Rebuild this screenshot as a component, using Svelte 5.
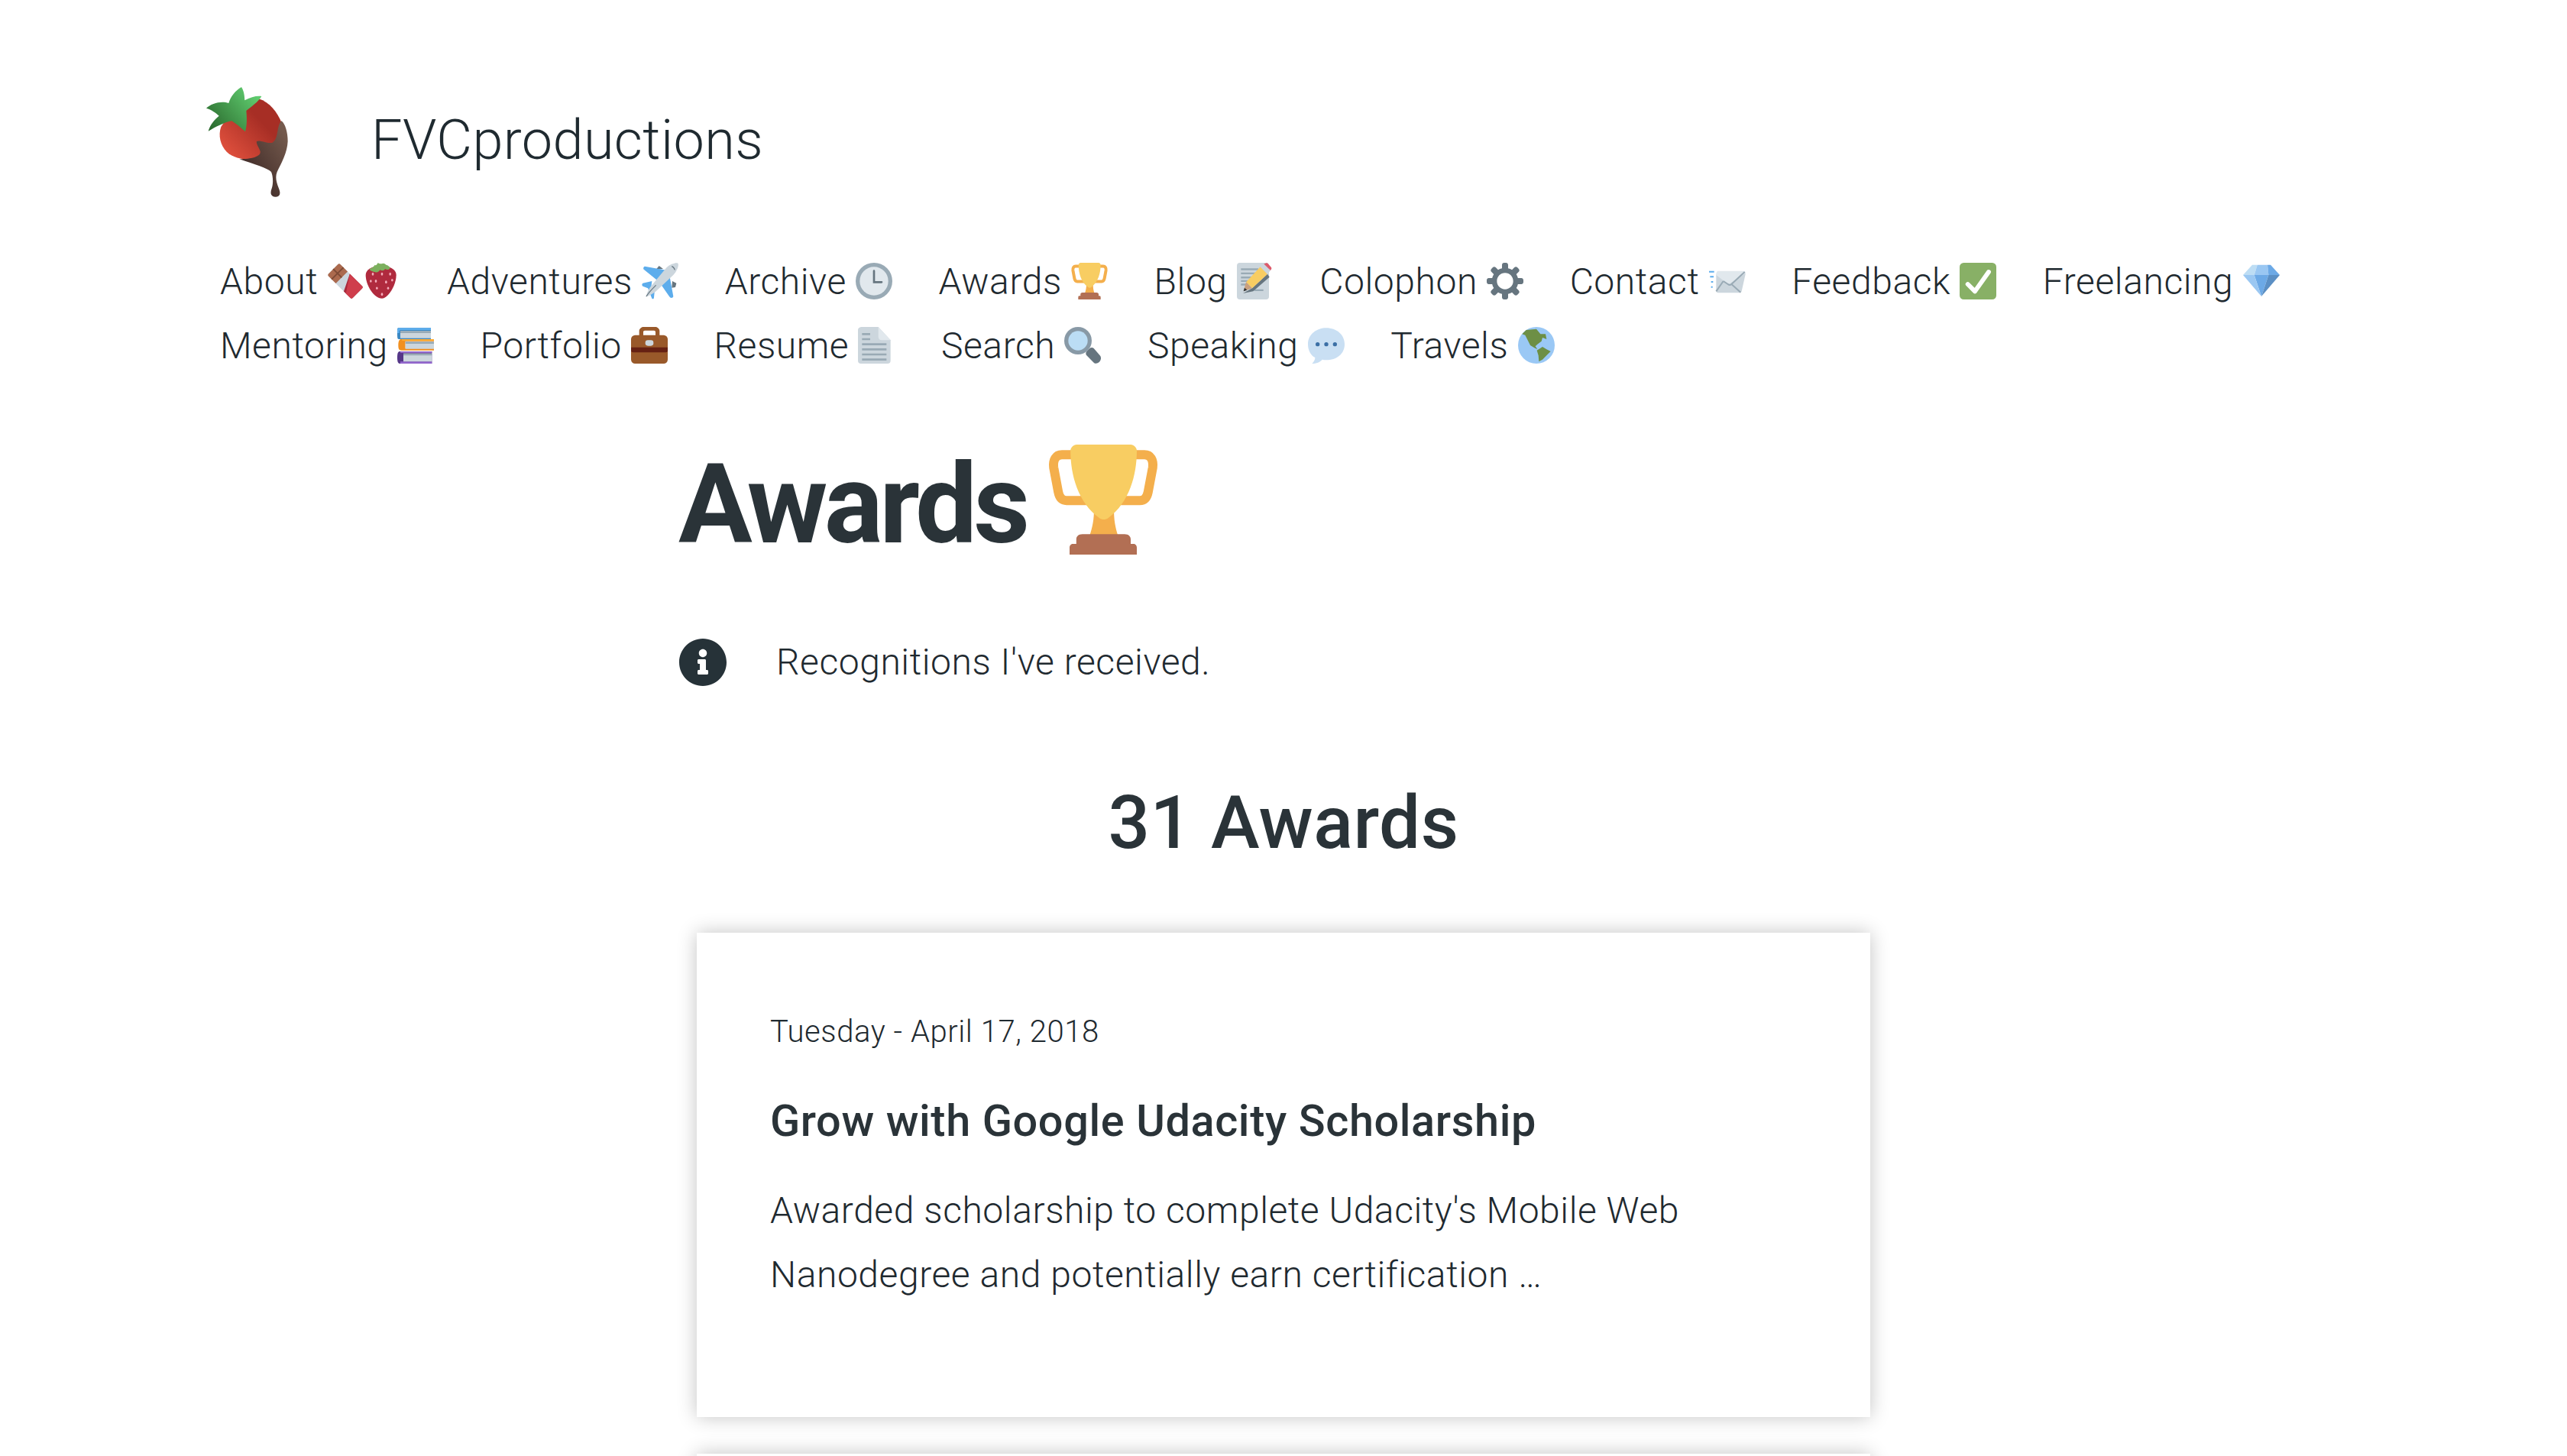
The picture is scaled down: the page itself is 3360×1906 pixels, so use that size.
<div class="page">
  <header class="brand">
    <svg class="logo" width="180" height="180" viewBox="0 0 540 540" aria-hidden="true">
      <defs>
        <linearGradient id="lr" x1="150" y1="340" x2="300" y2="200" gradientUnits="userSpaceOnUse"><stop offset="0" stop-color="#E5533F"/><stop offset="1" stop-color="#A72E25"/></linearGradient>
        <linearGradient id="lc" x1="230" y1="390" x2="410" y2="270" gradientUnits="userSpaceOnUse"><stop offset="0" stop-color="#3F2A27"/><stop offset="1" stop-color="#745A4D"/></linearGradient>
        <linearGradient id="lg" x1="110" y1="240" x2="280" y2="100" gradientUnits="userSpaceOnUse"><stop offset="0" stop-color="#2B6A2E"/><stop offset="1" stop-color="#5FCB6E"/></linearGradient>
      </defs>
      <path fill="url(#lr)" d="M296 118C340 132 368 170 386 212L380 292 300 352C262 362 200 356 170 326 145 300 136 262 148 228L200 150Z"/>
      <path fill="url(#lc)" d="M385 205C400 215 410 250 410 285 408 330 385 370 368 405 360 425 365 445 375 470 384 492 378 503 362 503 345 503 339 490 347 470 354 450 352 420 345 405 330 390 280 375 220 355 270 355 305 345 302 325 298 310 285 295 288 285 300 278 330 295 350 290 375 275 365 225 385 205Z"/>
      <path fill="url(#lg)" d="M228 72C240 90 240 112 241 124 265 110 290 105 307 108 295 130 265 150 247 165 250 195 250 225 243 247 225 230 205 215 190 205 160 210 125 230 98 245 105 220 122 200 140 185 130 175 110 160 90 155 110 135 150 125 178 135 185 110 205 85 228 72Z"/>
    </svg>
    <span class="site">FVCproductions</span>
  </header>

  {#snippet trophy(cls)}
    <svg class={cls} viewBox="0 0 36 36">
      <path fill="none" stroke="#F4AF4C" stroke-width="3" d="M11 3.300H4.500C2.500 3.300 1.500 5 1.800 7.500L3.300 15.500C3.700 17.500 4.600 18.300 6 18.300H30C31.400 18.300 32.300 17.500 32.700 15.500L34.200 7.500C34.500 5 33.500 3.300 31.500 3.300H25"/>
      <path fill="#F4AF4C" d="M15 21h6.500c0 3.500.4 6 1.400 9H13.500c1-3 1.500-5.500 1.500-9Z"/>
      <path fill="#F8CD62" d="M7.300 2c0-1 1-2 2-2h17.700c1 0 2 1 2 2 0 8-2.500 17-9.300 22-1 .7-2.100.7-3 0C9.800 19 7.300 10 7.300 2Z"/>
      <path fill="#B26F54" d="M9.200 31c0-1 .7-1.700 2-1.700h13.800c1.300 0 2 .7 2 1.700v1.500h1c.6 0 1 .6 1 1.200V36H7v-2.300c0-.6.400-1.200 1-1.200h1.200Z"/>
    </svg>
  {/snippet}

  <nav class="nav">
    <a href="#about">About <span class="pair"><svg class="em" viewBox="0 0 36 36">
      <g transform="translate(18 18) rotate(-45)">
        <rect x="-8.2" y="-16.8" width="16.4" height="33.6" rx="1.6" fill="#CCD6DD"/>
        <path fill="#AB6A4E" d="M-8.2-15.2a1.600 1.600 0 0 1 1.600-1.600H6.600a1.600 1.600 0 0 1 1.600 1.600V-5H-8.200Z"/>
        <path fill="#7D4A35" d="M-.7-16.800H.7V-5H-.7ZM-8.200-11.500H8.200v1.400H-8.200Z"/>
        <path fill="#A82A3C" d="M8.200-2V15.200a1.600 1.600 0 0 1-1.600 1.600H-6.600a1.600 1.600 0 0 1-1.600-1.600V6Z"/>
        <path fill="#CF3E4C" d="M8.200-2V15.200a1.600 1.600 0 0 1-1.600 1.600H-6.600a1.600 1.600 0 0 1-1.600-1.600V9Z"/>
      </g></svg><svg class="em" viewBox="0 0 36 36">
      <g transform="translate(-1 0)">
        <path fill="#B02A3E" d="M3 12C3 7 9 3 18 3s15 4 15 9c0 10-8 23-14 23C11 35 3 22 3 12Z"/>
        <path fill="#7CB05E" d="M7 6c2-1 4-2 5-4 1 1 2 0 3-2 1 1 3 1 4 1 1-1 3 0 4 1 1 0 3 1 4 3-1 2-3 2-5 1-1 2-3 2-5 1-1 2-3 3-5 2-2 0-4-1-5-2Z"/>
        <g fill="#F4ABBA"><ellipse cx="10" cy="11" rx="1" ry="1.500"/><ellipse cx="19" cy="11" rx="1" ry="1.500"/><ellipse cx="27" cy="11" rx="1" ry="1.500"/><ellipse cx="13" cy="18" rx="1" ry="1.500"/><ellipse cx="23" cy="19" rx="1" ry="1.500"/><ellipse cx="8" cy="18" rx="1" ry="1.300"/><ellipse cx="29" cy="17" rx="1" ry="1.300"/><ellipse cx="14" cy="25" rx="1" ry="1.300"/><ellipse cx="25" cy="25" rx="1" ry="1.300"/><ellipse cx="19" cy="31" rx="1" ry="1.500"/></g>
      </g></svg></span></a>

    <a href="#adventures">Adventures <svg class="em" viewBox="0 0 36 36">
      <path fill="#66757F" d="M14 6.500l3-3.500 4 3ZM30 18l4 2-1 4-3.500 .5Z"/>
      <path fill="#5DADEC" d="M3 3.500C1.500 4 1 6 2.500 7L15 17 25 7.500ZM27 11L18 20l9 13c1 2 3.500 2 4 0ZM10 18L1 20c-1 1-1 2 0 3l8 3ZM6 25l4 10c1 1 2 .5 2-1l1-10Z"/>
      <path fill="#CCD6DD" d="M35.500 .5C36.500 2 35.500 7 31 12L14 28C10 31 6 33 4 33.500 4.500 31.500 6 27 9 23L24 5C28 1 34-.5 35.500 .5Z"/>
      <path fill="none" stroke="#66757F" stroke-width=".9" d="M4.500 33C7.500 28 11 25 14 22M29.500 3.500c1.500 .5 2.500 2 3 3.500"/></svg></a>

    <a href="#archive">Archive <svg class="em" viewBox="0 0 36 36">
      <circle cx="18" cy="18" r="18" fill="#99AAB5"/><circle cx="18" cy="18" r="14" fill="#E1E8ED"/>
      <path fill="none" stroke="#66757F" stroke-width="2" stroke-linecap="round" d="M18 8v11h7.500"/></svg></a>

    <a href="#awards">Awards {@render trophy('em')}</a>

    <a href="#blog">Blog <svg class="em" viewBox="0 0 36 36">
      <rect width="31.500" height="36" rx="3" fill="#CCD6DD"/>
      <path fill="#99AAB5" d="M4 5.500h17v1.800H4ZM4 9.500h15v1.800H4ZM4 13.500h12v1.800H4ZM4 17h9v1.800H4ZM4 20.500h7v1.800H4ZM17 26h9v1.800H17Z"/>
      <path fill="#66757F" d="M30 11l2 3L16 28 6 30l9-5Z"/>
      <path fill="#F8CD62" d="M23 4l7 7L15 25l-6-6Z"/>
      <path fill="#CCD6DD" d="M26.500 1.200L33 7.500 30 11l-7-7Z"/>
      <path fill="#DD5A6B" d="M26.500 1.200L29 .2c.5-.2 1 0 1.300 .3L33.700 4.500c.4 .5 .4 1 .2 1.500L33 7.500Z"/>
      <path fill="#C9A07E" d="M9 19l6 6-8.500 3Z"/>
      <path fill="#292F33" d="M6.500 28l1-3.500L10 26.800Z"/></svg></a>

    <a href="#colophon">Colophon <svg class="em" viewBox="0 0 36 36">
      <path fill="#66757F" fill-rule="evenodd" d="M34 15h-3.362c-.324-1.369-.864-2.651-1.582-3.814l2.379-2.379c.781-.781.781-2.048 0-2.829l-1.414-1.414c-.781-.781-2.048-.781-2.828 0l-2.379 2.379C23.650 6.225 22.369 5.686 21 5.362V2c0-1.104-.896-2-2-2h-2c-1.104 0-2 .896-2 2v3.362c-1.369.324-2.651.864-3.814 1.582L8.808 4.565c-.781-.781-2.048-.781-2.828 0L4.565 5.979c-.781.781-.781 2.048-.001 2.829l2.379 2.379C6.225 12.350 5.686 13.632 5.362 15H2c-1.104 0-2 .896-2 2v2c0 1.104.896 2 2 2h3.362c.324 1.368.864 2.650 1.582 3.813l-2.379 2.379c-.780.780-.780 2.048.001 2.829l1.414 1.414c.780.780 2.047.780 2.828 0l2.379-2.379c1.163.719 2.445 1.258 3.814 1.582V34c0 1.104.896 2 2 2h2c1.104 0 2-.896 2-2v-3.362c1.369-.324 2.650-.864 3.813-1.582l2.379 2.379c.781.780 2.048.780 2.828 0l1.414-1.414c.781-.781.781-2.049 0-2.829l-2.379-2.379c.719-1.163 1.258-2.445 1.582-3.814H34c1.104 0 2-.896 2-2v-2c0-1.104-.896-2-2-2zM18 26c-4.418 0-8-3.582-8-8s3.582-8 8-8 8 3.582 8 8-3.582 8-8 8z"/></svg></a>

    <a href="#contact">Contact <svg class="em" viewBox="0 0 36 36">
      <path fill="#CCD6DD" d="M9 10l24-1c2 0 3 1 2.700 2.500L32 28c-.300 1-1 1.500-2.500 1.500H9c-1.500 0-2-1-2-2.500L7 12c0-1 1-2 2-2Z"/>
      <path fill="#E1E8ED" d="M9 8h25c1.500 0 2 1 1.500 2.500L21 20c-1 .700-2.500.700-3.500 0L7 12c0-2 .500-4 2-4Z"/>
      <path fill="none" stroke="#99AAB5" stroke-width="1.500" d="M35 9L22 21c-1 .800-2.500.800-3.500 0L14 18M14 18L7 28M22 21l9 8"/>
      <path fill="#5DADEC" d="M0 8h5v1.500H0ZM1 13h3.500v1.500H1ZM2 18h2v1.500H2ZM2 23h1.500v1.500H2Z"/></svg></a>

    <a href="#feedback">Feedback <svg class="em" viewBox="0 0 36 36">
      <rect width="36" height="36" rx="4" fill="#88B066"/>
      <path fill="none" stroke="#fff" stroke-width="4.400" stroke-linecap="round" stroke-linejoin="round" d="M8 21l7 7L28.500 9"/></svg></a>

    <a href="#freelancing">Freelancing <svg class="em" viewBox="0 0 36 36">
      <path fill="#BDDDF4" d="M9 2h5l-3 10H0Z"/>
      <path fill="#9AC7F2" d="M14 2h10l1 10H11Z"/>
      <path fill="#6CA9E6" d="M24 2h3l9 10H25ZM11 12h14l-7 21Z"/>
      <path fill="#9AC7F2" d="M0 12h11l7 21Z"/>
      <path fill="#5B8FC4" d="M25 12h11L18 33Z"/></svg></a>

    <a href="#mentoring">Mentoring <svg class="em" viewBox="0 0 36 36">
      <path fill="#3B88C3" d="M2 1h31v11H2C0 12 0 11 0 6s0-5 2-5Z"/><path fill="#5DADEC" d="M2 1h31v2H4C2 3 2 4 2 6h-2c0-4 0-5 2-5Z"/>
      <path fill="#CCD6DD" d="M3 4h30v7H3Z"/><path fill="#99AAB5" d="M3 4h30v2H3Z"/>
      <path fill="#F19020" d="M4 12h32v2H8v7h28v2H4c-2 0-3-1-3-5s1-6 3-6Z"/><path fill="#FFAC33" d="M4 12h32v1.500H5Z"/>
      <path fill="#CCD6DD" d="M8 14.500h28v7H8Z"/><path fill="#99AAB5" d="M8 14.500h28v2H8Z"/>
      <path fill="#553788" d="M3 24h31v12H3c-2 0-3-1-3-6s1-6 3-6Z"/><path fill="#9266CC" d="M3 34h31v2H3ZM3 24h31v1.500H3Z"/>
      <path fill="#CCD6DD" d="M6 26h28v8H6Z"/><path fill="#99AAB5" d="M6 26h28v2H6Z"/></svg></a>

    <a href="#portfolio">Portfolio <svg class="em" viewBox="0 0 36 36">
      <path fill="#99592A" fill-rule="evenodd" d="M12 0h12c2 0 4 2 4 4v6h-4V5c0-1-.500-1.500-1.500-1.500h-9C12.500 3.500 12 4 12 5v5H8V4c0-2 2-4 4-4Z"/>
      <rect y="8" width="36" height="28" rx="4" fill="#99592A"/>
      <path fill="#662113" d="M0 20h36v3.500c0 1-1 1.500-2 1.500H2c-1 0-2-.500-2-1.500Z"/>
      <rect x="14" y="13" width="8" height="5.500" rx="2.500" fill="#CCD6DD"/></svg></a>

    <a href="#resume">Resume <svg class="em" viewBox="0 0 36 36">
      <path fill="#CCD6DD" d="M4 0h16l12 13v20c0 2-1 3-3 3H3c-2 0-3-1-3-3V3c0-2 2-3 4-3Z"/>
      <path fill="#E1E8ED" d="M20 0l12 13H24c-2.500 0-4-1-4-4Z"/>
      <path fill="#99AAB5" d="M4 6h8v2H4ZM4 11h8v2H4ZM4 16h24v2H4ZM4 21h24v2H4ZM4 26h24v2H4ZM4 31h24v2H4Z"/></svg></a>

    <a href="#search">Search <svg class="em" viewBox="0 0 36 36">
      <path fill="#66757F" d="M22 24l3-3c1-1 3-1 4 0l6 7c1.500 1.500 1.300 4-.200 6s-4.300 2.500-5.800 1l-7-7c-1-1-1-3 0-4Z"/>
      <circle cx="13.500" cy="13.500" r="13.500" fill="#8899A6"/><circle cx="13.500" cy="13.500" r="9.500" fill="#BBDDF5"/></svg></a>

    <a href="#speaking">Speaking <svg class="em" viewBox="0 0 36 36">
      <path fill="#C9DFF3" d="M18 1C9 1 0 7 0 17c0 6 3 11 7 13 0 2-1 4-3 6 4 0 8-1.500 10-4 1.300.300 2.700.500 4 .500 10 0 18-6 18-15.500S28 1 18 1Z"/>
      <g fill="#3B6FA5"><circle cx="9.500" cy="17" r="2"/><circle cx="18" cy="17" r="2"/><circle cx="26.500" cy="17" r="2"/></g></svg></a>

    <a href="#travels">Travels <svg class="em" viewBox="0 0 36 36">
      <circle cx="18" cy="18" r="18" fill="#9AC8F5"/>
      <path fill="#6D8F45" d="M4 7L8 3 18 2l4 5 5 0 1 5-4-1.500L23 14l-4 3-2 2 2 3-3-1.500L12 18 9 12 7 8Z"/>
      <path fill="#6D8F45" d="M18.500 23l5.500-3.500 4 2.500 4 2-4 4-4 4-3.500 2L20 28Z"/></svg></a>
  </nav>

  <main class="main">
    <h1 class="title">Awards {@render trophy('em big')}</h1>

    <div class="note">
      <svg class="info" viewBox="0 0 512 512"><path fill="#263238" d="M256 8C119.043 8 8 119.083 8 256c0 136.997 111.043 248 248 248s248-111.003 248-248C504 119.083 392.957 8 256 8zm0 110c23.196 0 42 18.804 42 42s-18.804 42-42 42-42-18.804-42-42 18.804-42 42-42zm56 254c0 6.627-5.373 12-12 12h-88c-6.627 0-12-5.373-12-12v-24c0-6.627 5.373-12 12-12h12v-64h-12c-6.627 0-12-5.373-12-12v-24c0-6.627 5.373-12 12-12h64c6.627 0 12 5.373 12 12v100h12c6.627 0 12 5.373 12 12v24z"/></svg>
      <p>Recognitions I've received.</p>
    </div>

    <h2 class="count">31 Awards</h2>

    <article class="card">
      <time>Tuesday - April 17, 2018</time>
      <h3>Grow with Google Udacity Scholarship</h3>
      <p>Awarded scholarship to complete Udacity's Mobile Web Nanodegree and potentially earn certification …</p>
    </article>
    <article class="card next"></article>
  </main>
</div>

<style>
  :global(html), :global(body) { margin: 0; background: #fff; overflow: hidden; }
  .page {
    height: 1906px;
    overflow: hidden;
    font-family: Roboto, "Liberation Sans", sans-serif;
    font-weight: 300;
    font-size: 48px;
    line-height: 84px;
    letter-spacing: 0.56px;
    color: #1f2a30;
  }
  .brand { display: flex; align-items: center; padding: 90px 0 0 240px; height: 180px; gap: 66px; }
  .logo { display: block; }
  .site { font-size: 72px; line-height: 84px; position: relative; top: 4px; letter-spacing: 0.4px; }
  .nav { display: flex; flex-wrap: wrap; column-gap: 60.5px; row-gap: 0; padding: 57px 240px 0 288px; }
  .nav a { color: inherit; text-decoration: none; white-space: nowrap; }
  .em { width: 48px; height: 48px; vertical-align: -7px; }
  .pair { display: inline-block; }
  .main { width: 1600px; margin: 0 auto; }
  .title { margin: 82px 0 0; padding-left: 8px; font-size: 144px; line-height: 168px; font-weight: 700; letter-spacing: -4.68px; color: #2a3338; }
  .title :global(.big) { width: 144px; height: 144px; vertical-align: -16px; margin-left: -3px; }
  .note { display: flex; align-items: center; gap: 64px; margin-top: 80px; padding-left: 8px; }
  .info { width: 64px; height: 64px; flex: none; }
  .note p { margin: 0; }
  .count { margin: 108px 0 0; text-align: center; font-size: 96px; line-height: 120px; font-weight: 500; letter-spacing: 0.5px; color: #2a3338; }
  .card { margin: 84px 32px 0; height: 634px; padding: 96px; box-sizing: border-box; background: #fff; box-shadow: 0 0 24px rgba(0,0,0,.24); }
  .card.next { margin-top: 48px; }
  .card time { display: block; margin-top: 6px; font-size: 40px; line-height: 56px; }
  .card h3 { margin: 47px 0 0; font-size: 57.6px; line-height: 84px; font-weight: 500; letter-spacing: 0.62px; color: #2a3338; }
  .card p { margin: 33px 0 0; }
</style>
